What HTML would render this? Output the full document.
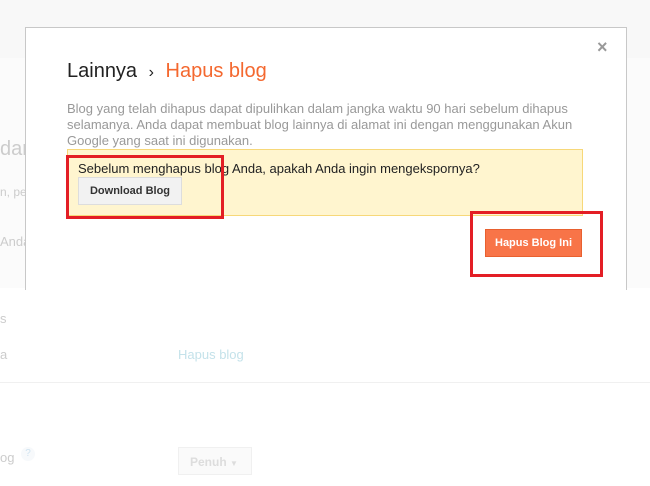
<!DOCTYPE html>
<html><head><style>
body{margin:0;width:650px;height:486px;background:#fff;position:relative;overflow:hidden;font-family:"Liberation Sans",Arial,sans-serif}
.a{position:absolute}
</style></head><body>
<div class="a" style="left:0;top:0;width:650px;height:58px;background:#f8f8f8"></div>
<div class="a" style="left:0;top:58px;width:25px;height:230px;background:#fbfbfb"></div>
<div class="a" style="left:626px;top:58px;width:24px;height:230px;background:#fbfbfb"></div>
<div class="a" style="left:0;top:138px;font-size:20px;color:#ccc">dar</div>
<div class="a" style="left:0;top:185px;font-size:12px;color:#ccc">n, pe</div>
<div class="a" style="left:0;top:234px;font-size:13px;color:#ccc">Anda</div>
<div class="a" style="left:0;top:311px;font-size:13px;color:#ccc">s</div>
<div class="a" style="left:0;top:347px;font-size:13px;color:#ccc">a</div>
<div class="a" style="left:178px;top:347px;font-size:13px;color:#c4e2ea">Hapus blog</div>
<div class="a" style="left:0;top:382px;width:650px;height:1px;background:#f0f0f0"></div>
<div class="a" style="left:0;top:450px;font-size:13px;color:#ccc">og</div>
<div class="a" style="left:21px;top:447px;width:14px;height:14px;border-radius:7px;background:#f7f9fb;color:#cfe3f0;font-size:10px;text-align:center;line-height:14px">?</div>
<div class="a" style="left:178px;top:447px;width:74px;height:28px;border:1px solid #f0f0f0;background:#fafafa;font-size:12px;font-weight:bold;color:#ddd;line-height:28px;box-sizing:border-box;padding-left:11px">Penuh <span style="font-size:8px">▼</span></div>

<div class="a" style="left:25px;top:27px;width:600px;height:262px;background:#fff;border:1px solid #c8c8c8;border-bottom:none"></div>
<div class="a" style="left:597px;top:37px;font-size:18px;font-weight:bold;color:#999">×</div>
<div class="a" style="left:67px;top:60px;font-size:20px;color:#222">Lainnya <span style="font-size:16px;padding:0 6px">›</span> <span style="color:#f4682f">Hapus blog</span></div>
<div class="a" style="left:67px;top:101px;width:530px;font-size:13px;line-height:16px;color:#999">Blog yang telah dihapus dapat dipulihkan dalam jangka waktu 90 hari sebelum dihapus selamanya. Anda dapat membuat blog lainnya di alamat ini dengan menggunakan Akun Google yang saat ini digunakan.</div>
<div class="a" style="left:67px;top:149px;width:514px;height:65px;background:#fff5cf;border:1px solid #f7d879"></div>
<div class="a" style="left:78px;top:161px;font-size:13px;color:#222">Sebelum menghapus blog Anda, apakah Anda ingin mengekspornya?</div>
<div class="a" style="left:78px;top:177px;width:102px;height:26px;background:#f2f2f2;border:1px solid #ddd;font-size:11px;font-weight:bold;color:#333;text-align:center;line-height:26px">Download Blog</div>
<div class="a" style="left:66px;top:155px;width:152px;height:58px;border:3px solid #e31e25"></div>
<div class="a" style="left:485px;top:229px;width:97px;height:28px;background:#f87448;border:1px solid #e8602f;box-sizing:border-box;font-size:11px;font-weight:bold;color:#fff;text-align:center;line-height:26px">Hapus Blog Ini</div>
<div class="a" style="left:470px;top:211px;width:127px;height:60px;border:3px solid #e31e25"></div>
</body></html>
